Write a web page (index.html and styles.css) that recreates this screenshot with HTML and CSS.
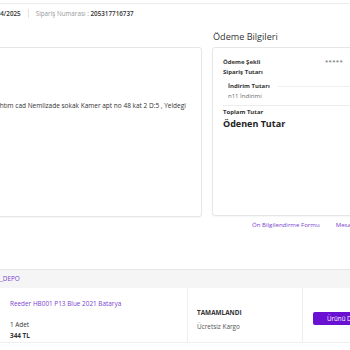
FILE: index.html
```
<!DOCTYPE html>
<html lang="tr">
<head>
    <meta charset="UTF-8">
    <meta name="viewport" content="width=device-width, initial-scale=1.0">
    <title>Sipariş Detayı</title>
    <link rel="stylesheet" href="styles.css">
</head>
<body>
    <div class="page">
        <div class="order-bar">
            <span class="order-date">03/04/2025</span>
            <span class="divider"></span>
            <span class="order-no"><span class="label">Sipariş Numarası :</span> 205317716737</span>
        </div>

        <div class="details">
            <div class="col">
                <div class="card address-card">
                    <p class="address">Rıhtım cad Nemlizade sokak Kamer apt no 48 kat 2 D:5 , Yeldegi</p>
                </div>
            </div>

            <div class="col">
                <h3 class="section-title">Ödeme Bilgileri</h3>
                <div class="card payment-card">
                    <div class="pay-row">
                        <span class="strong">Ödeme Şekli</span>
                        <span class="masked">*****</span>
                    </div>
                    <div class="pay-row"><span class="strong">Sipariş Tutarı</span></div>
                    <div class="discount">
                        <div class="discount-head">
                            <span class="strong">İndirim Tutarı</span>
                            <span class="rule"></span>
                        </div>
                        <div class="discount-item">n11 İndirimi</div>
                    </div>
                    <div class="total">
                        <div class="strong">Toplam Tutar</div>
                        <div class="paid">Ödenen Tutar</div>
                    </div>
                </div>
                <div class="links">
                    <a href="#">Ön Bilgilendirme Formu</a>
                    <span class="divider"></span>
                    <a href="#">Mesafeli Satış Sözleşmesi</a>
                </div>
            </div>
        </div>

        <div class="shipment">
            <div class="store">_DEPO</div>
            <div class="item-row">
                <div class="cell product">
                    <a href="#" class="product-name">Reeder HB001 P13 Blue 2021 Batarya</a>
                    <div class="qty">1 Adet</div>
                    <div class="price">344 TL</div>
                </div>
                <div class="cell status">
                    <div class="status-name">TAMAMLANDI</div>
                    <div class="cargo">Ücretsiz Kargo</div>
                </div>
                <div class="cell actions">
                    <button class="btn">Ürünü Değerlendir</button>
                </div>
            </div>
        </div>
    </div>
</body>
</html>
```

FILE: styles.css
```
* { box-sizing: border-box; }

body {
    margin: 0;
    font-family: "Open Sans", "Noto Sans", sans-serif;
    color: #333;
    background: #fff;
    overflow: hidden;
}

.page {
    margin-left: -48px;
    width: 460px;
}

.order-bar {
    margin-top: 3px;
    height: 22px;
    border-top: 1px solid #ececec;
    display: flex;
    align-items: center;
    padding: 0 0 2px 35px;
    font-size: 6.3px;
}

.order-date {
    font-weight: 600;
    color: #333;
}

.divider {
    width: 1px;
    height: 9px;
    background: #e4e4e4;
    margin: 0 7px;
}

.order-no {
    font-weight: 600;
    color: #333;
}

.order-no .label {
    color: #9a9a9a;
    font-weight: 400;
}

.details {
    display: grid;
    grid-template-columns: 250px 170px;
    column-gap: 10px;
    margin-top: 5px;
}

.section-title {
    margin: 0 0 3px 1px;
    font-size: 9.1px;
    line-height: 14px;
    font-weight: 400;
    color: #333;
}

.card {
    border: 1px solid #e6e6e6;
    border-radius: 3px;
    box-shadow: 0 1px 2px rgba(0,0,0,0.04);
    height: 170px;
    background: #fff;
}

.address-card {
    margin-top: 17px;
    padding: 53px 10px 0 41px;
}

.address {
    margin: 0;
    font-size: 6.5px;
    line-height: 10px;
    white-space: nowrap;
}

.payment-card {
    padding: 9px 0 0 10px;
    font-size: 6px;
    height: 169px;
}

.strong { font-weight: 700; }

.pay-row {
    display: flex;
    justify-content: space-between;
    line-height: 10px;
    padding-right: 38px;
}

.masked {
    color: #555;
    letter-spacing: 0.3px;
}

.discount {
    margin-top: 4px;
    padding-left: 5px;
    line-height: 10px;
}

.discount-head {
    display: flex;
    align-items: center;
    gap: 8px;
}

.rule {
    flex: 1;
    height: 1px;
    background: #efefef;
}

.discount-item {
    color: #666;
}

.total {
    margin-top: 4px;
    border-top: 1px solid #ececec;
    padding-top: 1px;
    line-height: 10px;
}

.paid {
    font-size: 9px;
    font-weight: 700;
    line-height: 13px;
    color: #222;
}

.links {
    display: flex;
    align-items: center;
    margin: 4px 0 0 40px;
    font-size: 6.1px;
    line-height: 10px;
    white-space: nowrap;
}

.links a {
    color: #7a3fcf;
    text-decoration: none;
}

.links .divider {
    margin: 0 8px;
}

.shipment {
    margin-top: 39px;
    border-top: 1px solid #e6e6e6;
}

.store {
    background: #f5f5f5;
    height: 18px;
    line-height: 18px;
    padding-left: 48px;
    font-size: 6.4px;
    color: #7a3fcf;
}

.item-row {
    display: grid;
    grid-template-columns: 236px 115px 1fr;
    height: 55px;
    border-bottom: 1px solid #eee;
}

.cell {
    border-right: 1px solid #eee;
    font-size: 6.4px;
}

.product {
    padding: 11px 0 0 58px;
}

.product-name {
    display: block;
    color: #7a3fcf;
    text-decoration: none;
    line-height: 10px;
}

.qty {
    margin-top: 11px;
    line-height: 10px;
}

.price {
    font-weight: 700;
    line-height: 11px;
}

.status {
    padding: 20px 0 0 9px;
    line-height: 10px;
}

.status-name {
    font-weight: 700;
}

.cargo {
    margin-top: 4px;
    color: #555;
}

.actions {
    border-right: none;
    padding: 24px 0 0 10px;
}

.btn {
    background: #6a10d3;
    color: #fff;
    border: none;
    border-radius: 2px;
    height: 13px;
    padding: 0 14px;
    font-family: inherit;
    font-size: 6.2px;
    white-space: nowrap;
}
```
